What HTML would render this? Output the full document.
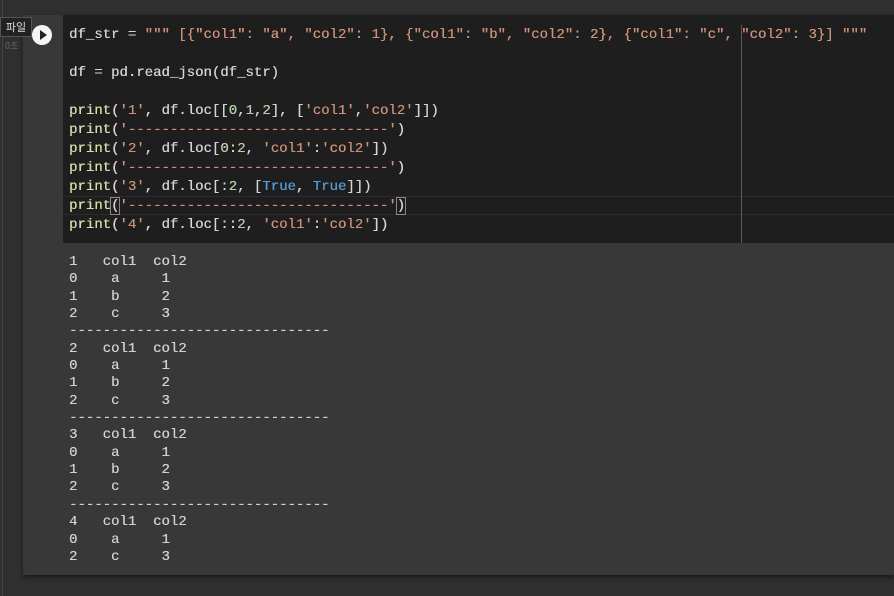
<!DOCTYPE html>
<html><head><meta charset="utf-8"><style>
*{margin:0;padding:0;box-sizing:border-box}
body{width:894px;height:596px;background:#2f2f2f;position:relative;overflow:hidden;font-family:"Liberation Mono",monospace}
.lline{position:absolute;left:2px;top:0;width:1px;height:596px;background:#444}
.cell{position:absolute;left:23px;top:15px;width:871px;height:560px;background:#383838;box-shadow:0 2px 4px rgba(0,0,0,.5)}
.code{position:absolute;left:63px;top:15px;width:831px;height:228px;background:#1e1e1e}
.hl{position:absolute;left:63px;width:831px;height:1px;background:#2c2c2c}
.ruler{position:absolute;left:741px;top:25px;width:1px;height:218px;background:#5a5a5a}
pre{position:absolute;left:69px;font-family:"Liberation Mono",monospace;font-size:14px;color:#d4d4d4;white-space:pre;text-shadow:0.3px 0 0 currentColor}
.c{top:26px;line-height:19px}
.o{top:254px;line-height:17.35px;color:#d0d0d0}
.s{color:#ce9178}.f{color:#dcdcaa}.n{color:#b5cea8}.k{color:#569cd6}
.br{outline:1px solid #888}
.tip{position:absolute;left:0;top:17px;width:32px;height:20px;background:#222;border:1px solid #555;color:#ddd;font:11px "Noto Sans CJK KR",sans-serif;text-align:center;line-height:18px}
.sec{position:absolute;left:5px;top:39px;color:#666;font:9px "Noto Sans CJK KR",sans-serif}
.run{position:absolute;left:32px;top:25px;width:20px;height:20px;border-radius:50%;background:#f5f5f5}
.run:after{content:"";position:absolute;left:8px;top:5px;border-left:7px solid #222;border-top:5px solid transparent;border-bottom:5px solid transparent}
</style></head><body>
<div class="lline"></div>
<div class="cell"></div>
<div class="code"></div>
<div class="hl" style="top:196px"></div>
<div class="hl" style="top:214px"></div>
<div class="ruler"></div>
<div class="tip">파일</div>
<div class="sec">0초</div>
<div class="run"></div>
<pre class="c">df_str = <span class="s">""" [{"col1": "a", "col2": 1}, {"col1": "b", "col2": 2}, {"col1": "c", "col2": 3}] """</span>

df = pd.read_json(df_str)

<span class="f">print</span>(<span class="s">'1'</span>, df.loc[[<span class="n">0</span>,<span class="n">1</span>,<span class="n">2</span>], [<span class="s">'col1'</span>,<span class="s">'col2'</span>]])
<span class="f">print</span>(<span class="s">'-------------------------------'</span>)
<span class="f">print</span>(<span class="s">'2'</span>, df.loc[<span class="n">0</span>:<span class="n">2</span>, <span class="s">'col1'</span>:<span class="s">'col2'</span>])
<span class="f">print</span>(<span class="s">'-------------------------------'</span>)
<span class="f">print</span>(<span class="s">'3'</span>, df.loc[:<span class="n">2</span>, [<span class="k">True</span>, <span class="k">True</span>]])
<span class="f">print</span><span class="br">(</span><span class="s">'-------------------------------'</span><span class="br">)</span>
<span class="f">print</span>(<span class="s">'4'</span>, df.loc[::<span class="n">2</span>, <span class="s">'col1'</span>:<span class="s">'col2'</span>])</pre>
<pre class="o">1   col1  col2
0    a     1
1    b     2
2    c     3
-------------------------------
2   col1  col2
0    a     1
1    b     2
2    c     3
-------------------------------
3   col1  col2
0    a     1
1    b     2
2    c     3
-------------------------------
4   col1  col2
0    a     1
2    c     3</pre>
</body></html>
